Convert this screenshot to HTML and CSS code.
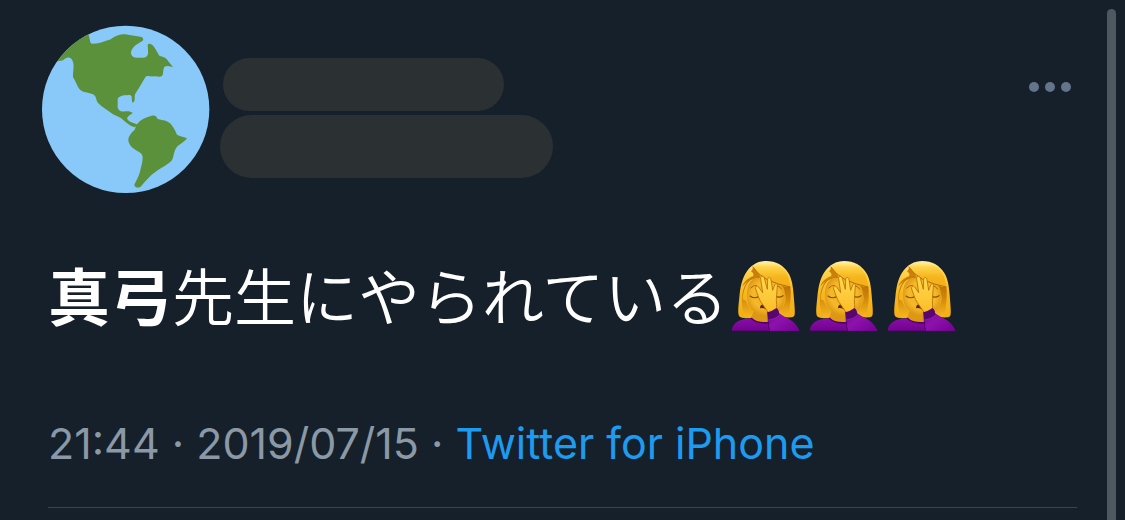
FILE: index.html
```html
<!DOCTYPE html>
<html lang="ja">
<head>
<meta charset="utf-8">
<meta name="viewport" content="width=device-width, initial-scale=1">
<title>Tweet</title>
<link rel="stylesheet" href="styles.css">
</head>
<body>
<svg class="defs" aria-hidden="true">
  <defs>
    <linearGradient id="hair" x1="0" y1="0" x2="0" y2="1">
      <stop offset="0" stop-color="#fff0a0"/>
      <stop offset=".2" stop-color="#ffd349"/>
      <stop offset=".6" stop-color="#f6b51c"/>
      <stop offset="1" stop-color="#f3ae17"/>
    </linearGradient>
    <linearGradient id="side" x1="0" y1="0" x2="0" y2="1">
      <stop offset="0" stop-color="#b56c06"/>
      <stop offset=".45" stop-color="#cf850a"/>
      <stop offset="1" stop-color="#f6b71e"/>
    </linearGradient>
    <radialGradient id="face" cx=".5" cy=".45" r=".6">
      <stop offset="0" stop-color="#efb024"/>
      <stop offset=".6" stop-color="#f5b828"/>
      <stop offset="1" stop-color="#d48c10"/>
    </radialGradient>
    <linearGradient id="hand" x1="0" y1="0" x2="0" y2="1">
      <stop offset="0" stop-color="#ffda50"/>
      <stop offset="1" stop-color="#fbbd26"/>
    </linearGradient>
    <linearGradient id="shirt" x1="0" y1="0" x2="0" y2="1">
      <stop offset="0" stop-color="#8510a5"/>
      <stop offset="1" stop-color="#750091"/>
    </linearGradient>
    <linearGradient id="arm" x1="0" y1="0" x2="1" y2="1">
      <stop offset="0" stop-color="#65057f"/>
      <stop offset=".45" stop-color="#8d12ad"/>
      <stop offset="1" stop-color="#750091"/>
    </linearGradient>
    <symbol id="facepalm" viewBox="9 -6 234 255">
      <path d="M44 188C37 184 40 157 43 130C46 100 50 78 62 58C78 32 100 21 124 21C152 21 176 34 190 57C201 75 204 98 206 123C208 151 212 181 207 187C202 192 188 190 172 190L62 193Q49 192 44 188Z" fill="url(#hair)"/>
      <path d="M84 71C65 84 57 104 54 126Q52 140 60 139C64 139 65 154 82 170L76 190L62 190C54 180 48 150 52 124C54 98 66 79 84 71Z" fill="url(#side)"/>
      <path d="M142 82C161 91 178 99 196 99Q198 110 197 123C197 151 192 178 188 187L176 189L162 171C173 159 180 149 182 135Q183 109 142 82Z" fill="url(#side)"/>
      <path d="M85 172L78 199Q99 212 133 203L139 169Z" fill="#dc9716"/>
      <path d="M82 77C111 62 155 78 174 98C182 111 182 134 177 147C169 171 148 187 125 187C96 187 70 165 67 139C64 111 67 88 82 77Z" fill="url(#face)"/>
      <path d="M78 52Q86 43 83 38Q99 54 109 71Q75 71 52 97C56 86 66 73 84 67Q89 59 78 52Z" fill="#c98009"/>
      <path d="M84 37C105 20 145 22 168 39C184 51 193 70 196 99C168 99 147 87 119 75Q99 59 84 37Z" fill="url(#hair)"/>
      <path d="M83 38Q99 62 125 76Q157 92 196 99" fill="none" stroke="#b66d06" stroke-width="3"/>
      <path d="M75 126Q88 136 103 127M152 126Q162 133 174 125" fill="none" stroke="#875009" stroke-width="3.5" stroke-linecap="round"/>
      <path d="M77 102Q85 94 94 94M154 94Q165 98 170 105" fill="none" stroke="#a96608" stroke-width="3" stroke-linecap="round"/>
      <path d="M105 163Q105 151 116 150L126 157L126 168Q115 160 105 163Z" fill="#5e270b"/>
      <path d="M20 230C23 209 39 195 77 193Q96 212 132 205L150 202L198 207Q219 216 223 230Z" fill="url(#shirt)"/>
      <path d="M78 192Q96 210 132 206" fill="none" stroke="#540068" stroke-width="5"/>
      <path d="M130 176L109 146C101 134 98 121 92 105C90 98 97 93 101 99L113 116L107 74C106 65 115 64 118 73L127 106L128 76C129 68 137 69 138 77L143 109L149 93C152 86 159 89 157 96L154 137Q155 153 155 164Q145 174 130 176Z" fill="url(#hand)" stroke="#b96f07" stroke-width="2.5" stroke-linejoin="round"/>
      <path d="M127 174Q136 175 153 163Q159 164 163 178C178 192 208 194 223 230H132C128 210 128 197 127 174Z" fill="url(#arm)"/>
      <path d="M127 174Q142 176 154 163Q160 164 163 181Q151 196 130 197Z" fill="#58076f"/>
      <path d="M131 198Q151 196 165 184" fill="none" stroke="#9920ae" stroke-width="2"/>
      <path d="M131 202Q129 219 134 230" fill="none" stroke="#4c0061" stroke-width="3"/>
    </symbol>
  </defs>
</svg>
<main class="tweet">
  <header class="author">
    <svg class="avatar" viewBox="36 30 504 504" role="img" aria-label="Profile picture">
      <clipPath id="disc"><circle cx="287" cy="283" r="251"/></clipPath>
      <circle cx="287" cy="283" r="251" fill="#88c9f9"/>
      <g clip-path="url(#disc)" fill="#5c913b">
        <path d="M85 139L50 90L170 35L178 68C181 77 179 84 187 86C203 88 227 78 242 73C260 60 274 56 294 59L331 65C341 67 342 75 336 79C321 87 306 97 303 111C302 127 315 129 330 128C348 129 356 124 354 107L353 89C358 83 367 89 374 98L388 122C402 125 411 130 414 138L429 156L414 153C397 153 402 163 399 175C398 188 389 186 374 184C360 186 352 179 345 188L330 214C320 231 314 235 314 247C315 259 311 265 306 261L305 244C300 237 294 242 287 240C277 242 266 243 263 253L263 277C266 290 274 291 286 289C295 288 304 290 308 294L295 304C286 312 297 318 304 322L325 329L313 337C298 332 287 321 273 309L249 298C235 286 216 276 204 264C197 254 200 247 193 241C184 232 164 235 152 226C141 216 138 199 129 187C128 168 136 145 124 131C115 124 107 129 99 136Z"/>
        <path d="M319 331C327 319 337 311 353 306C366 302 370 299 378 304L383 312C400 316 415 317 425 330C433 341 437 350 441 359C449 364 459 364 471 370C464 381 448 387 440 397C430 410 432 429 424 438C413 449 396 457 381 467C359 482 345 499 332 515C324 520 314 518 313 509C322 491 330 477 333 457C337 443 340 427 336 419C329 408 308 405 299 388C290 371 298 362 307 351C318 344 315 338 319 331Z"/>
      </g>
    </svg>
    <div class="names" aria-hidden="true">
      <span class="mask mask-name"></span>
      <span class="mask mask-handle"></span>
    </div>
    <button class="more" type="button" aria-label="More">
      <svg class="dots" viewBox="0 0 42 10" aria-hidden="true"><circle cx="5" cy="5" r="5"/><circle cx="21" cy="5" r="5"/><circle cx="37" cy="5" r="5"/></svg>
    </button>
  </header>
  <p class="body"><span><strong>真弓</strong>先生にやられている</span><span class="emojis" role="img" aria-label="Woman facepalming, three times"><svg class="emoji"><use href="#facepalm"/></svg><svg class="emoji"><use href="#facepalm"/></svg><svg class="emoji"><use href="#facepalm"/></svg></span></p>
  <p class="meta">21:44 · 2019/07/15 · <a class="source" href="#">Twitter for iPhone</a></p>
</main>
<div class="scrollbar" aria-hidden="true"></div>
</body>
</html>
```
FILE: styles.css
```css
* {
  box-sizing: border-box;
}

body {
  margin: 0;
  background: #16202b;
  color: #fff;
  font-family: Inter, "Noto Sans CJK JP", sans-serif;
  overflow: hidden;
}

.defs {
  position: absolute;
  width: 0;
  height: 0;
}

.tweet {
  padding: 25px 48px 0;
}

.author {
  display: flex;
  align-items: flex-start;
  margin: 0 6px 0 -6px;
}

.avatar {
  width: 168px;
  height: 168px;
  flex: none;
}

.names {
  display: flex;
  flex: 1;
  flex-direction: column;
  gap: 4px;
  padding: 33px 0 0 10px;
}

.mask {
  border-radius: 32px;
  background: #2b3033;
}

.mask-name {
  width: 281px;
  height: 53px;
  margin-left: 3px;
}

.mask-handle {
  width: 333px;
  height: 63px;
}

.more {
  display: flex;
  margin-top: 52px;
  padding: 5px 0;
  border: 0;
  background: none;
  cursor: pointer;
}

.dots {
  width: 42px;
  height: 10px;
  fill: #64758a;
}

.body {
  display: flex;
  flex-wrap: wrap;
  align-items: center;
  margin: 56px 0 0;
  font-family: "Noto Sans CJK JP", sans-serif;
  font-size: 62px;
  font-weight: 350;
  line-height: 90px;
}

.body strong {
  font-weight: 700;
}

.emojis {
  display: flex;
}

.emoji {
  width: 78px;
  height: 85px;
}

.meta {
  margin: 73px 0 0;
  padding-bottom: 33px;
  border-bottom: 1px solid #3a444e;
  color: #8b98a5;
  font-size: 43px;
  line-height: 62px;
}

.source {
  color: #1d9bf0;
  text-decoration: none;
}

.scrollbar {
  position: fixed;
  top: 9px;
  right: 9px;
  bottom: 0;
  width: 9px;
  border-radius: 5px 5px 0 0;
  background: #4e5861;
}
```
